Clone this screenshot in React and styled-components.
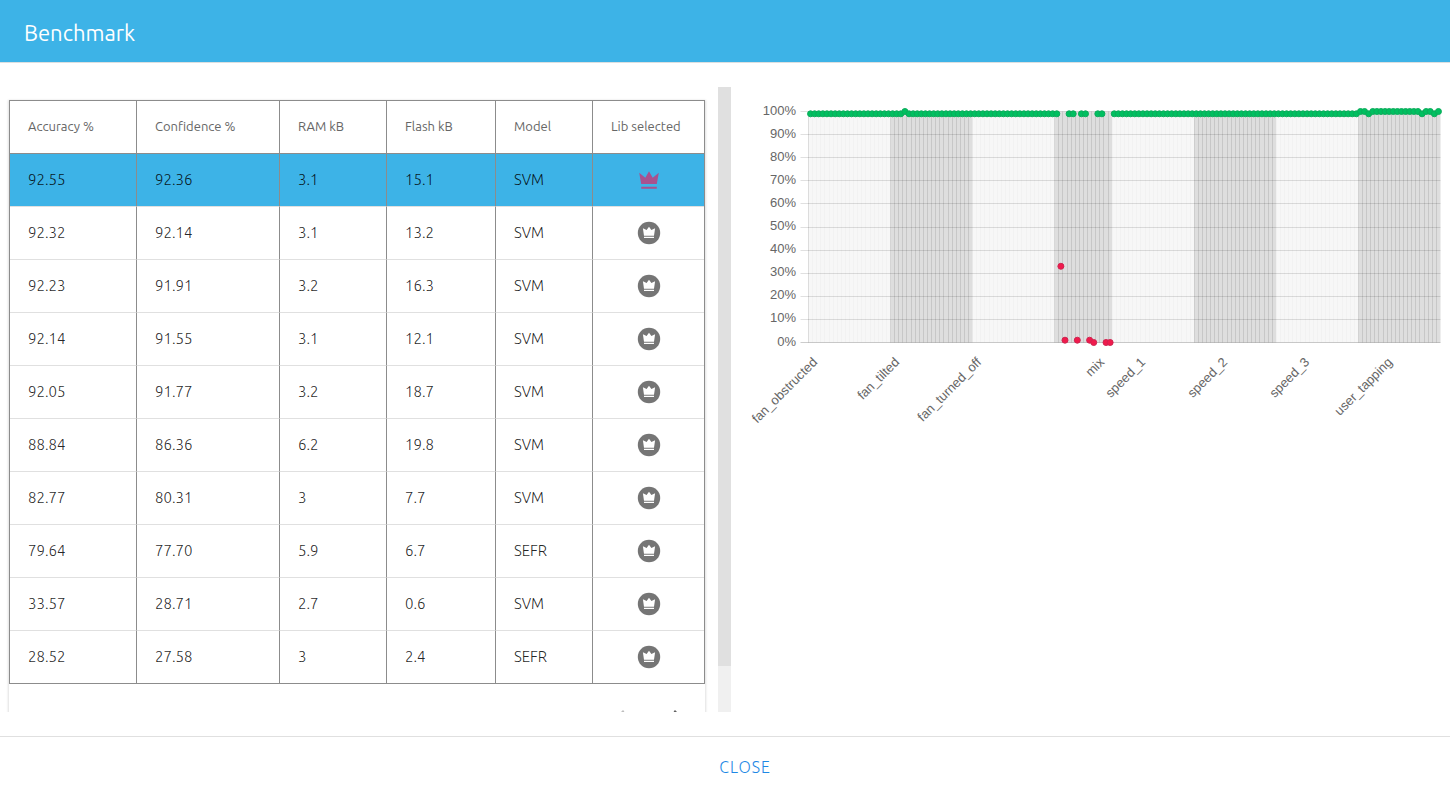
import React from "react";
import styled, { createGlobalStyle } from "styled-components";

const Global = createGlobalStyle`
  *, *::before, *::after { box-sizing: border-box; }
  body { margin: 0; background: #fff; font-family: Ubuntu, "Noto Sans", "Open Sans", sans-serif; }
`;

const Dialog = styled.div`
  display: flex;
  flex-direction: column;
  height: 100vh;
  overflow: hidden;
`;

const Header = styled.header`
  display: flex;
  align-items: center;
  height: 63px;
  padding: 4px 24px 0;
  background: #3db3e7;
  border-bottom: 1px solid #dcdfe0;
`;

const Title = styled.h1`
  margin: 0;
  color: #fff;
  font-size: 22px;
  line-height: 32px;
  font-weight: 400;
`;

const Body = styled.main`
  flex: 1;
  min-height: 0;
  display: grid;
  grid-template-columns: 731fr 719fr;
  grid-template-rows: minmax(0, 1fr);
  padding: 24px 0;
`;

const TablePane = styled.section`
  display: flex;
  min-width: 0;
  overflow: hidden;
`;

const TableArea = styled.div`
  flex: 1;
  min-width: 0;
  overflow: hidden;
  padding: 13px 13px 0 9px;
`;

const Track = styled.div`
  width: 13px;
  background: #f0f0f0;
`;

const Thumb = styled.div`
  height: 579px;
  max-height: 93%;
  background: #e0e0e0;
`;

const Paper = styled.div`
  box-shadow: 0 1px 2px 1px rgba(0, 0, 0, 0.12);
  background: #fff;
`;

const Table = styled.table`
  width: 100%;
  table-layout: fixed;
  border-collapse: separate;
  border-spacing: 0;
  border: 1px solid #8c8c8c;
  border-bottom: 0;
`;

const Col = styled.col`
  width: ${(p) => p.$width}px;
`;

const HeadCell = styled.th`
  height: 53px;
  padding: 0 0 2px 18px;
  border-right: 1px solid #8c8c8c;
  border-bottom: 1px solid #8c8c8c;
  color: #666;
  font-size: 13px;
  font-weight: 400;
  line-height: 20px;
  text-align: left;
  white-space: nowrap;
  &:last-child { border-right: 0; }
`;

const Cell = styled.td`
  height: 53px;
  padding: 0 0 1px ${(p) => (p.$center ? 0 : 18)}px;
  border-right: 1px solid #8c8c8c;
  border-bottom: 1px solid #e0e0e0;
  color: rgba(0, 0, 0, 0.87);
  font-size: 15px;
  font-weight: 300;
  line-height: 20px;
  text-align: ${(p) => (p.$center ? "center" : "left")};
  &:last-child { border-right: 0; }
`;

const Row = styled.tr`
  background: ${(p) => (p.$selected ? "#3db3e7" : "#fff")};
  &:last-child > td { border-bottom-color: #8c8c8c; }
`;

const IconButton = styled.button`
  display: inline-flex;
  padding: 0;
  border: 0;
  background: none;
  vertical-align: middle;
  cursor: pointer;
`;

const Pager = styled.nav`
  display: flex;
  justify-content: flex-end;
  gap: 8px;
  padding: 8px 4px;
`;

const PageButton = styled.button`
  display: flex;
  padding: 12px;
  border: 0;
  background: none;
  color: #616161;
  &:disabled { color: #bdbdbd; }
`;

const ChartPane = styled.section`
  min-width: 0;
`;

const ChartSvg = styled.svg`
  display: block;
  width: 100%;
  height: auto;
`;

const AxisText = styled.text`
  fill: #666;
  font-family: "Liberation Sans", Arial, sans-serif;
  font-size: 13px;
  text-anchor: end;
`;

const Footer = styled.footer`
  display: flex;
  align-items: center;
  justify-content: center;
  height: 59px;
  padding: 2px 0 0 40px;
  border-top: 1px solid #e0e0e0;
`;

const CloseButton = styled.button`
  padding: 4px 8px;
  border: 0;
  background: none;
  color: #1e88e5;
  font: 300 16px/24px Ubuntu, "Noto Sans", "Open Sans", sans-serif;
  letter-spacing: 1px;
  cursor: pointer;
`;

const columns = [
  ["Accuracy %", 127],
  ["Confidence %", 143],
  ["RAM kB", 107],
  ["Flash kB", 109],
  ["Model", 97],
  ["Lib selected", 111],
];

const rows = [
  ["92.55", "92.36", "3.1", "15.1", "SVM"],
  ["92.32", "92.14", "3.1", "13.2", "SVM"],
  ["92.23", "91.91", "3.2", "16.3", "SVM"],
  ["92.14", "91.55", "3.1", "12.1", "SVM"],
  ["92.05", "91.77", "3.2", "18.7", "SVM"],
  ["88.84", "86.36", "6.2", "19.8", "SVM"],
  ["82.77", "80.31", "3", "7.7", "SVM"],
  ["79.64", "77.70", "5.9", "6.7", "SEFR"],
  ["33.57", "28.71", "2.7", "0.6", "SVM"],
  ["28.52", "27.58", "3", "2.4", "SEFR"],
];

function Crown({ selected }) {
  return selected ? (
    <svg width="24" height="24" viewBox="0 0 24 24" fill="#a8528f" aria-hidden="true">
      <path d="M4.2 16 2.2 4.8 8.3 9.8 12 3.3l3.7 6.5 6.1-5L19.8 16zM4.2 18.8h15.6v2H4.2z" />
    </svg>
  ) : (
    <svg width="24" height="24" viewBox="0 0 24 24" aria-hidden="true">
      <circle cx="12" cy="12" r="11.2" fill="#757575" />
      <path fill="#fff" d="M7 14.8 5.9 7.3l3.7 1.6L12 5.8l2.4 3.1 3.7-1.6L17 14.8zM7 15.7h10v1.4H7z" />
    </svg>
  );
}

const groups = [
  ["fan_obstructed", 20],
  ["fan_tilted", 20],
  ["fan_turned_off", 20],
  ["mix", 14],
  ["speed_1", 20],
  ["speed_2", 20],
  ["speed_3", 20],
  ["user_tapping", 20],
];
// the tick of the mixed group is placed on its tenth sample
const tickIndex = [0, 20, 40, 70, 80, 100, 120, 140];
const low = { 61: 33, 62: 1, 65: 1, 68: 1, 69: 0, 72: 0, 73: 0 };
const total = 154;
const left = 77.5;
const right = 709.5;
const top = 24.5;
const bottom = 255.5;
const step = (right - left) / total;
const yOf = (v) => bottom - ((bottom - top) * v) / 100;

const samples = Array.from({ length: total }, (_, i) => {
  if (i in low) return low[i];
  if (i === 23) return 100;
  if (i >= 134 && ![136, 149, 152].includes(i)) return 100;
  return 99;
});

function Chart() {
  let start = 0;
  const bands = groups.map(([name, count], g) => {
    const band = { name, start, count, dark: g % 2 === 1 };
    start += count;
    return band;
  });
  const ticks = Array.from({ length: 11 }, (_, i) => i * 10);
  return (
    <ChartSvg viewBox="0 0 719 360" role="img" aria-label="Confidence per sample">
      {bands.map((b) => (
        <rect
          key={b.name}
          x={left + b.start * step}
          y={top}
          width={b.count * step}
          height={bottom - top}
          fill={b.dark ? "#dedede" : "#f7f7f7"}
        />
      ))}
      {bands.flatMap((b) =>
        Array.from({ length: b.count }, (_, i) => (
          <line
            key={b.name + i}
            x1={Math.floor(left + (b.start + i) * step) + 0.5}
            x2={Math.floor(left + (b.start + i) * step) + 0.5}
            y1={top}
            y2={bottom}
            stroke="#000"
            strokeOpacity={b.start + i === 0 ? 0.12 : b.dark ? 0.1 : 0.02}
          />
        ))
      )}
      {ticks.map((v) => (
        <g key={v}>
          <line
            x1={left - 8}
            x2={right}
            y1={Math.round(yOf(v) - 0.5) + 0.5}
            y2={Math.round(yOf(v) - 0.5) + 0.5}
            stroke="#000"
            strokeOpacity={v === 0 ? 0.2 : 0.12}
          />
          <AxisText x="65" y={Math.round(yOf(v)) + 3}>{v}%</AxisText>
        </g>
      ))}
      {samples.map((v, i) => (
        <circle
          key={i}
          cx={left + (i + 0.5) * step}
          cy={yOf(v)}
          r="3"
          fill={v > 50 ? "#00c060" : "#f01a4c"}
          stroke={v > 50 ? "#0cab5b" : "#cf2450"}
          strokeWidth="1"
        />
      ))}
      {bands.map((b, g) => (
        <AxisText
          key={b.name}
          transform={`translate(${Math.floor(left + tickIndex[g] * step) + 10} 276) rotate(-45)`}
        >
          {b.name}
        </AxisText>
      ))}
    </ChartSvg>
  );
}

export default function App() {
  return (
    <>
      <Global />
      <Dialog>
        <Header>
          <Title>Benchmark</Title>
        </Header>
        <Body>
          <TablePane>
            <TableArea>
              <Paper>
                <Table>
                  <colgroup>
                    {columns.map(([name, width]) => <Col key={name} $width={width} />)}
                  </colgroup>
                  <thead>
                    <tr>
                      {columns.map(([name]) => <HeadCell key={name} scope="col">{name}</HeadCell>)}
                    </tr>
                  </thead>
                  <tbody>
                    {rows.map((row, r) => (
                      <Row key={row[0]} $selected={r === 0}>
                        {row.map((value, c) => <Cell key={c}>{value}</Cell>)}
                        <Cell $center>
                          <IconButton type="button" aria-label="Select library" aria-pressed={r === 0}>
                            <Crown selected={r === 0} />
                          </IconButton>
                        </Cell>
                      </Row>
                    ))}
                  </tbody>
                </Table>
                <Pager aria-label="Pages">
                  <PageButton type="button" disabled aria-label="Previous page">
                    <svg width="24" height="24" viewBox="0 0 24 24" fill="currentColor">
                      <path d="M15.41 7.41 14 6l-6 6 6 6 1.41-1.41L10.83 12z" />
                    </svg>
                  </PageButton>
                  <PageButton type="button" aria-label="Next page">
                    <svg width="24" height="24" viewBox="0 0 24 24" fill="currentColor">
                      <path d="M10 6 8.59 7.41 13.17 12l-4.58 4.59L10 18l6-6z" />
                    </svg>
                  </PageButton>
                </Pager>
              </Paper>
            </TableArea>
            <Track><Thumb /></Track>
          </TablePane>
          <ChartPane>
            <Chart />
          </ChartPane>
        </Body>
        <Footer>
          <CloseButton type="button">CLOSE</CloseButton>
        </Footer>
      </Dialog>
    </>
  );
}
